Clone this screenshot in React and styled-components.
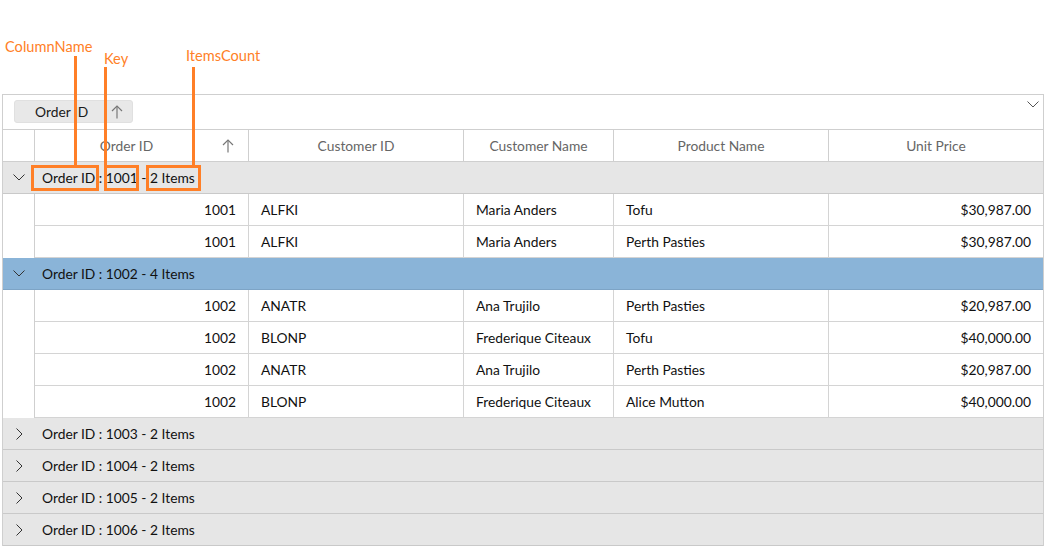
import React from "react";
import styled, { createGlobalStyle } from "styled-components";

const GlobalStyle = createGlobalStyle`
  html, body { margin: 0; padding: 0; background: #fff; }
  body { font-family: Lato, "Noto Sans", sans-serif; }
`;

const ORANGE = "#ff7f27";

const Page = styled.div`
  position: relative;
  width: 1047px;
  height: 548px;
  overflow: hidden;
  padding-top: 94px;
  padding-left: 2px;
  box-sizing: border-box;
`;

const Grid = styled.div`
  width: 1042px;
  height: 452px;
  border: 1px solid #cfcfcf;
  box-sizing: border-box;
  font-size: 13.8px;
  color: #1a1a1a;
`;

const DropArea = styled.div`
  position: relative;
  height: 35px;
  border-bottom: 1px solid #cfcfcf;
  display: flex;
  align-items: flex-start;
  padding: 5px 0 0 11px;
  box-sizing: border-box;
`;

const Chip = styled.div`
  display: flex;
  align-items: center;
  width: 119px;
  height: 23px;
  box-sizing: border-box;
  background: #e8e8e8;
  border: 1px solid #e0e0e0;
  border-radius: 3px;
  padding-left: 20px;
  color: #1a1a1a;
`;

const ChipLabel = styled.span`
  flex: 1;
`;

const ChipIcon = styled.span`
  display: flex;
  width: 30px;
  justify-content: center;
`;

const DropToggle = styled.span`
  position: absolute;
  right: 4px;
  top: 6px;
  display: flex;
`;

const COLS = "32px 214px 215px 150px 215px 214px";

const Row = styled.div`
  display: grid;
  grid-template-columns: ${COLS};
  height: 32px;
`;

const HeaderCell = styled.div`
  position: relative;
  display: flex;
  align-items: center;
  justify-content: center;
  border-bottom: 1px solid #cfcfcf;
  border-right: ${(p) => (p.$last ? "none" : "1px solid #cfcfcf")};
  color: #666;
  box-sizing: border-box;
  padding-right: ${(p) => (p.$sorted ? "30px" : "0")};
`;

const SortIcon = styled.span`
  position: absolute;
  right: 14px;
  top: 9px;
  display: flex;
`;

const Indent = styled.div`
  border-right: 1px solid #cfcfcf;
  box-sizing: border-box;
`;

const Cell = styled.div`
  display: flex;
  align-items: center;
  justify-content: ${(p) => (p.$right ? "flex-end" : "flex-start")};
  padding: 0 ${(p) => (p.$right ? "12px" : "0")} 0 ${(p) => (p.$right ? "0" : "12px")};
  border-bottom: 1px solid #d4d4d4;
  border-right: ${(p) => (p.$last ? "none" : "1px solid #d4d4d4")};
  box-sizing: border-box;
  color: #111;
`;

const GroupRow = styled.div`
  display: flex;
  align-items: center;
  height: 32px;
  box-sizing: border-box;
  background: ${(p) => (p.$selected ? "#8ab4d8" : "#e6e6e6")};
  border-bottom: 1px solid ${(p) => (p.$selected ? "#7da4c6" : "#c9c9c9")};
  color: #111;
`;

const GroupToggle = styled.span`
  display: flex;
  width: 32px;
  justify-content: center;
  align-items: center;
`;

const GroupCaption = styled.span`
  padding-left: 7px;
`;

const Label = styled.span`
  position: absolute;
  left: ${(p) => p.$x}px;
  top: ${(p) => p.$y}px;
  color: ${ORANGE};
  font-size: 14.6px;
  line-height: 16px;
`;

const Line = styled.span`
  position: absolute;
  left: ${(p) => p.$x}px;
  top: ${(p) => p.$y}px;
  width: 3px;
  height: ${(p) => p.$h}px;
  background: ${ORANGE};
`;

const Box = styled.span`
  position: absolute;
  left: ${(p) => p.$x}px;
  top: 165px;
  width: ${(p) => p.$w}px;
  height: 26px;
  border: 3px solid ${ORANGE};
  box-sizing: border-box;
`;

const ArrowUp = () => (
  <svg width="12" height="14" viewBox="0 0 12 14" fill="none" stroke="#777" strokeWidth="1.2">
    <path d="M6 13.5V1" />
    <path d="M1 6L6 1l5 5" />
  </svg>
);

const ChevronDown = ({ color = "#333" }) => (
  <svg width="12" height="7" viewBox="0 0 12 7" fill="none" stroke={color} strokeWidth="1">
    <path d="M0.5 0.5L6 6l5.5-5.5" />
  </svg>
);

const ChevronRight = () => (
  <svg width="7" height="12" viewBox="0 0 7 12" fill="none" stroke="#333" strokeWidth="1">
    <path d="M0.5 0.5L6 6L0.5 11.5" />
  </svg>
);

const groups = [
  {
    key: 1001,
    expanded: true,
    rows: [
      ["1001", "ALFKI", "Maria Anders", "Tofu", "$30,987.00"],
      ["1001", "ALFKI", "Maria Anders", "Perth Pasties", "$30,987.00"],
    ],
  },
  {
    key: 1002,
    expanded: true,
    selected: true,
    rows: [
      ["1002", "ANATR", "Ana Trujilo", "Perth Pasties", "$20,987.00"],
      ["1002", "BLONP", "Frederique Citeaux", "Tofu", "$40,000.00"],
      ["1002", "ANATR", "Ana Trujilo", "Perth Pasties", "$20,987.00"],
      ["1002", "BLONP", "Frederique Citeaux", "Alice Mutton", "$40,000.00"],
    ],
  },
  { key: 1003, count: 2 },
  { key: 1004, count: 2 },
  { key: 1005, count: 2 },
  { key: 1006, count: 2 },
];

const headers = ["Order ID", "Customer ID", "Customer Name", "Product Name", "Unit Price"];

export default function App() {
  return (
    <Page>
      <GlobalStyle />
      <Grid>
        <DropArea>
          <Chip>
            <ChipLabel>Order ID</ChipLabel>
            <ChipIcon>
              <ArrowUp />
            </ChipIcon>
          </Chip>
          <DropToggle>
            <ChevronDown color="#555" />
          </DropToggle>
        </DropArea>
        <Row>
          <HeaderCell />
          {headers.map((h, i) => (
            <HeaderCell key={h} $sorted={i === 0} $last={i === headers.length - 1}>
              {h}
              {i === 0 && (
                <SortIcon>
                  <ArrowUp />
                </SortIcon>
              )}
            </HeaderCell>
          ))}
        </Row>
        {groups.map((g) => (
          <React.Fragment key={g.key}>
            <GroupRow $selected={g.selected}>
              <GroupToggle>{g.expanded ? <ChevronDown /> : <ChevronRight />}</GroupToggle>
              <GroupCaption>
                Order ID : {g.key} - {g.rows ? g.rows.length : g.count} Items
              </GroupCaption>
            </GroupRow>
            {g.expanded &&
              g.rows.map((r, ri) => (
                <Row key={ri}>
                  <Indent />
                  {r.map((v, ci) => (
                    <Cell key={ci} $right={ci === 0 || ci === 4} $last={ci === 4}>
                      {v}
                    </Cell>
                  ))}
                </Row>
              ))}
          </React.Fragment>
        ))}
      </Grid>

      <Label $x={5} $y={39}>ColumnName</Label>
      <Label $x={104} $y={51}>Key</Label>
      <Label $x={186} $y={48}>ItemsCount</Label>
      <Line $x={74} $y={56} $h={110} />
      <Line $x={104} $y={67} $h={99} />
      <Line $x={192} $y={67} $h={99} />
      <Box $x={31} $w={68} />
      <Box $x={104} $w={35} />
      <Box $x={146} $w={55} />
    </Page>
  );
}
